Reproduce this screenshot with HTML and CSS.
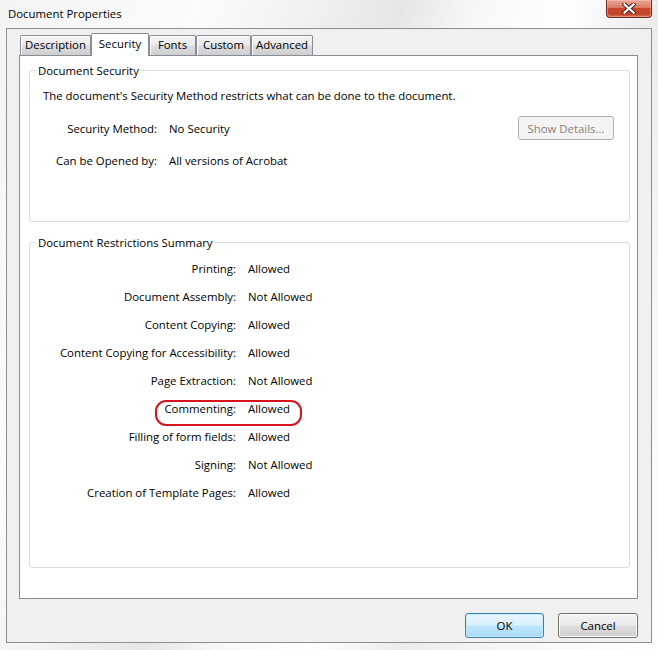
FILE: index.html
```html
<!DOCTYPE html>
<html lang="en">
<head>
<meta charset="utf-8">
<title>Document Properties</title>
<link rel="stylesheet" href="styles.css">
</head>
<body>
<div class="window">
  <div class="titlebar">
    <span class="title">Document Properties</span>
    <button class="close" aria-label="Close">
      <svg width="14" height="11" viewBox="0 0 14 11">
        <path d="M2.5 1.5 L11.5 9.5 M11.5 1.5 L2.5 9.5" stroke="#4a2520" stroke-width="4.2" stroke-linecap="square" fill="none"/>
        <path d="M2.5 1.5 L11.5 9.5 M11.5 1.5 L2.5 9.5" stroke="#ffffff" stroke-width="2.2" stroke-linecap="square" fill="none"/>
      </svg>
    </button>
  </div>
  <div class="client">
    <div class="tabs">
      <div class="tab tab-desc">Description</div>
      <div class="tab tab-sec active">Security</div>
      <div class="tab tab-fonts">Fonts</div>
      <div class="tab tab-custom">Custom</div>
      <div class="tab tab-adv">Advanced</div>
    </div>
    <div class="pane">
      <div class="group group-security">
        <div class="legend">Document Security</div>
        <p class="intro">The document's Security Method restricts what can be done to the document.</p>
        <div class="fields fields-security">
          <span class="lbl">Security Method:</span>
          <span class="val">No Security</span>
          <button class="btn btn-disabled">Show Details...</button>
          <span class="lbl">Can be Opened by:</span>
          <span class="val">All versions of Acrobat</span>
          <span></span>
        </div>
      </div>
      <div class="group group-restrict">
        <div class="legend">Document Restrictions Summary</div>
        <div class="fields fields-restrict">
          <span class="lbl">Printing:</span><span class="val">Allowed</span>
          <span class="lbl">Document Assembly:</span><span class="val">Not Allowed</span>
          <span class="lbl">Content Copying:</span><span class="val">Allowed</span>
          <span class="lbl">Content Copying for Accessibility:</span><span class="val">Allowed</span>
          <span class="lbl">Page Extraction:</span><span class="val">Not Allowed</span>
          <span class="lbl circled">Commenting:</span><span class="val">Allowed</span>
          <span class="lbl">Filling of form fields:</span><span class="val">Allowed</span>
          <span class="lbl">Signing:</span><span class="val">Not Allowed</span>
          <span class="lbl">Creation of Template Pages:</span><span class="val">Allowed</span>
        </div>
      </div>
    </div>
    <div class="actions">
      <button class="btn btn-default">OK</button>
      <button class="btn">Cancel</button>
    </div>
  </div>
</div>
</body>
</html>
```

FILE: styles.css
```css
* { box-sizing: border-box; }

html, body {
  margin: 0;
  padding: 0;
}

body {
  width: 658px;
  height: 650px;
  overflow: hidden;
  font-family: "Open Sans", "Noto Sans", sans-serif;
  font-size: 11.4px;
  color: #000;
  background: linear-gradient(112deg, #f4f4f4 0%, #fbfbfb 22%, #f1f1f1 34%, #e6e6e6 44%, #f7f7f7 52%, #ffffff 62%, #ececec 72%, #f6f6f6 84%, #ffffff 100%);
}

.window {
  display: flex;
  flex-direction: column;
  height: 650px;
}

.titlebar {
  height: 28px;
  display: flex;
  align-items: flex-start;
  padding-left: 8px;
}

.title {
  line-height: 28px;
  color: #000;
}

.close {
  margin-left: auto;
  margin-right: 6px;
  width: 46px;
  height: 18px;
  padding: 0;
  border: 1px solid #6d2b20;
  border-top: none;
  border-radius: 0 0 4px 4px;
  background: linear-gradient(#e9a99a 0%, #dc7a63 45%, #c9462b 50%, #c2452a 80%, #d46a4c 100%);
  box-shadow: inset 0 0 0 1px rgba(255, 200, 190, 0.45);
  display: flex;
  align-items: center;
  justify-content: center;
}

.client {
  margin: 0 6px;
  height: 615px;
  border: 1px solid #8f8f8f;
  background: #f0f0f0;
  padding: 4px 13px 4px 12px;
  display: flex;
  flex-direction: column;
}

.tabs {
  height: 22px;
  display: flex;
  align-items: flex-end;
  padding-left: 1px;
}

.tab {
  height: 20px;
  line-height: 17px;
  text-align: center;
  border: 1px solid #898c95;
  border-bottom: none;
  border-radius: 2px 2px 0 0;
  background: linear-gradient(#f3f3f3 0%, #ebebeb 48%, #dcdcdc 52%, #cfcfcf 100%);
  box-shadow: inset 1px 1px 0 #fcfcfc;
  color: #000;
}

.tab.active {
  position: relative;
  z-index: 1;
  height: 23px;
  line-height: 19px;
  margin-bottom: -1px;
  background: #ffffff;
  box-shadow: none;
}

.tab-desc { width: 71px; }
.tab-sec { width: 58px; }
.tab-fonts { width: 47px; }
.tab-custom { width: 55px; }
.tab-adv { width: 62px; }

.pane {
  height: 544px;
  border: 1px solid #898c95;
  background: #ffffff;
  padding: 14px 7px 0 9px;
  display: flex;
  flex-direction: column;
  gap: 20px;
}

.group {
  border: 1px solid #d5dfe5;
  border-radius: 3px;
}

.group-security { height: 152px; }
.group-restrict { height: 326px; }

.legend {
  width: fit-content;
  margin: -8px 0 0 6px;
  padding: 0 2px;
  line-height: 15px;
  background: #ffffff;
}

.intro {
  margin: 10px 0 0 13px;
  line-height: 16px;
}

.fields {
  display: grid;
  column-gap: 12px;
  align-items: center;
  padding-left: 13px;
}

.fields-security {
  margin-top: 12px;
  grid-template-columns: 114px 1fr auto;
  grid-auto-rows: 24px;
  row-gap: 8px;
  padding-right: 15px;
}

.fields-restrict {
  margin-top: 8px;
  grid-template-columns: 193px 1fr;
  grid-auto-rows: 20px;
  row-gap: 8px;
}

.lbl {
  text-align: right;
  white-space: nowrap;
}

.val { white-space: nowrap; }

.circled { position: relative; }

.circled::after {
  content: "";
  position: absolute;
  left: 112px;
  top: -1px;
  width: 143px;
  height: 22px;
  border: 2px solid #d7141d;
  border-radius: 11px;
}

.btn {
  font-family: inherit;
  font-size: inherit;
  color: #000;
  padding: 0;
  height: 25px;
  border: 1px solid #707070;
  border-radius: 3px;
  background: linear-gradient(#f2f2f2 0%, #ebebeb 48%, #dddddd 52%, #cfcfcf 100%);
  box-shadow: inset 0 0 0 1px #fcfcfc;
}

.btn-disabled {
  width: 96px;
  height: 24px;
  color: #838383;
  border-color: #adb2b5;
  background: #f4f4f4;
  box-shadow: none;
}

.actions {
  margin-top: 14px;
  display: flex;
  justify-content: flex-end;
  gap: 14px;
}

.actions .btn { width: 80px; }
.actions .btn-default { width: 79px; }

.btn-default {
  border-color: #3c7fb1;
  background: linear-gradient(#eaf6fd 0%, #d9f0fc 48%, #bee6fd 52%, #a7d9f5 100%);
  box-shadow: inset 0 0 0 1px #c8ebfc;
}
```
